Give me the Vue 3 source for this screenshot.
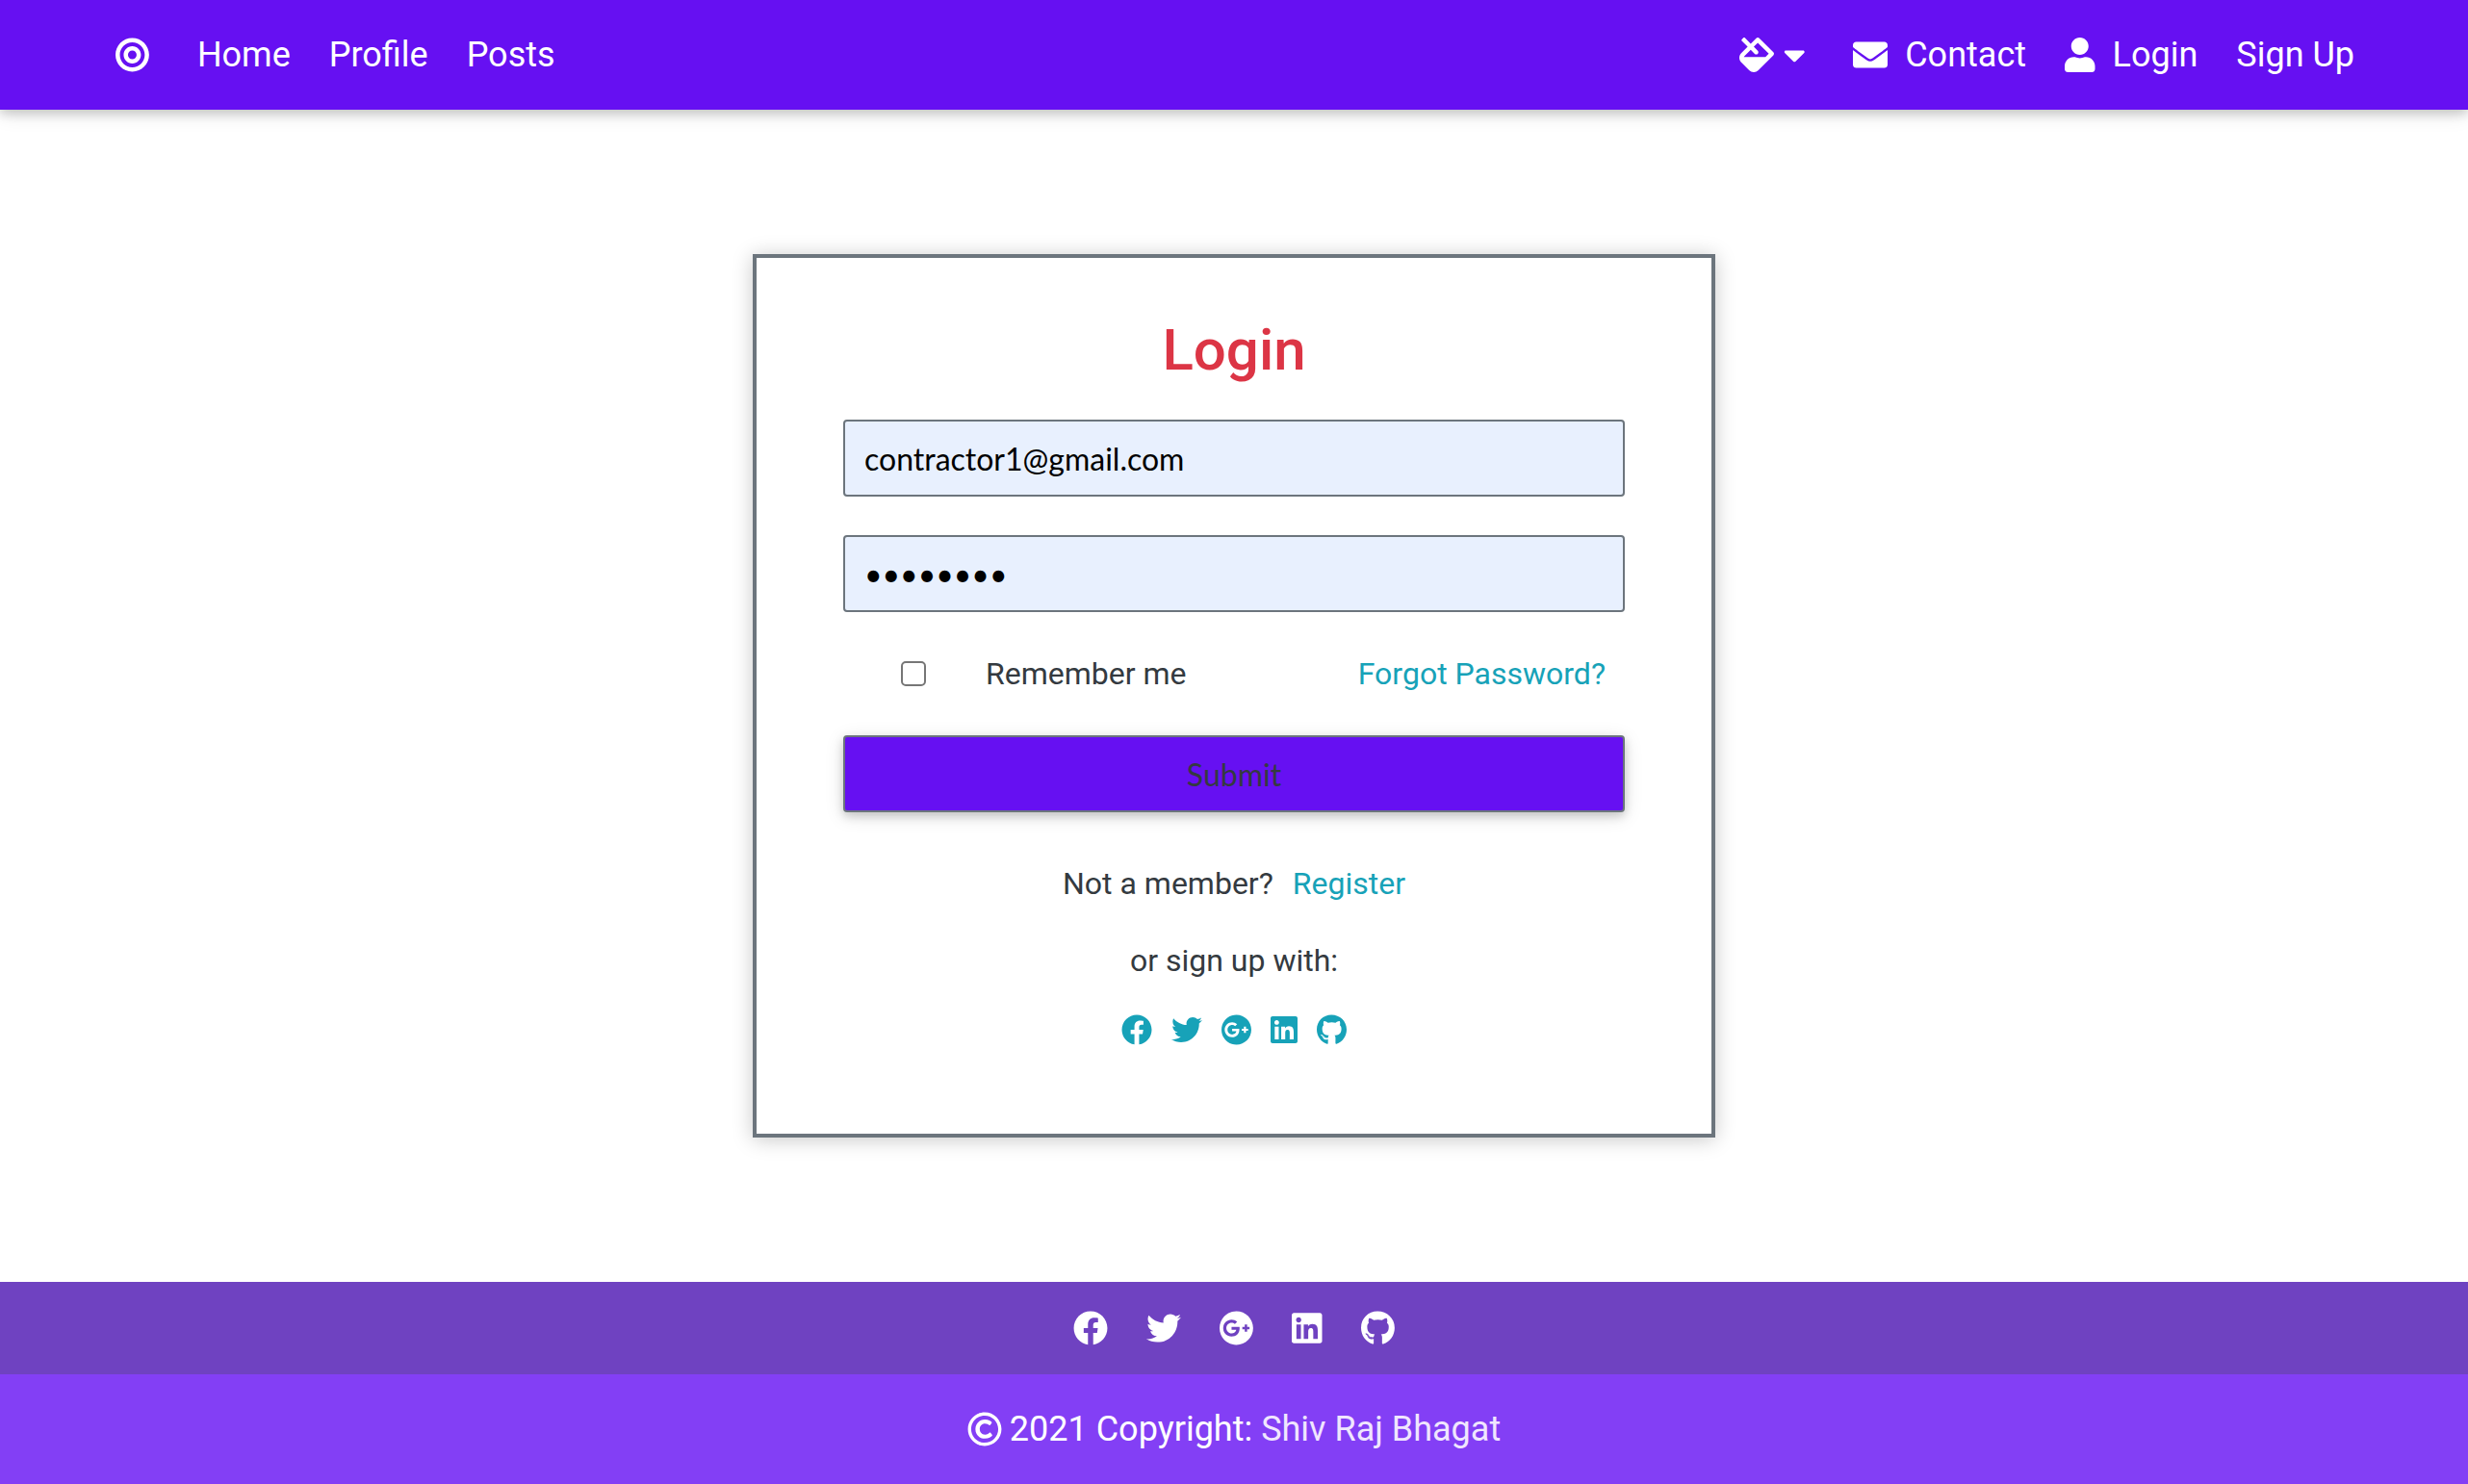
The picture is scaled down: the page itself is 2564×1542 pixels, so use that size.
<script setup>
import { h, ref } from 'vue'

const icons = {
  bullseye: [496, 'M248 8C111.03 8 0 119.03 0 256s111.03 248 248 248 248-111.03 248-248S384.97 8 248 8zm0 432c-101.69 0-184-82.29-184-184 0-101.69 82.29-184 184-184 101.69 0 184 82.29 184 184 0 101.69-82.29 184-184 184zm0-312c-70.69 0-128 57.31-128 128s57.31 128 128 128 128-57.31 128-128-57.31-128-128-128zm0 192c-35.29 0-64-28.71-64-64s28.71-64 64-64 64 28.71 64 64-28.71 64-64 64z'],
  fill: [512, 'M502.63 217.06L294.94 9.37C288.69 3.12 280.5 0 272.31 0s-16.38 3.12-22.62 9.37l-81.58 81.58L81.93 4.77c-6.24-6.25-16.38-6.25-22.62 0L36.69 27.38c-6.24 6.25-6.24 16.38 0 22.63l86.19 86.18-94.76 94.76c-37.49 37.49-37.49 98.26 0 135.75l117.19 117.19c18.75 18.74 43.31 28.12 67.87 28.12 24.57 0 49.13-9.37 67.88-28.12l221.57-221.57c12.49-12.5 12.49-32.76 0-45.26zm-116.22 70.97H65.93c1.36-3.84 3.57-7.98 7.43-11.83l13.15-13.15 81.61-81.61 58.61 58.6c12.49 12.49 32.75 12.49 45.24 0 12.49-12.49 12.49-32.75 0-45.24l-58.61-58.6 58.95-58.95 162.45 162.44-48.35 48.34z'],
  envelope: [512, 'M502.3 190.8c3.9-3.1 9.7-.2 9.7 4.7V400c0 26.5-21.5 48-48 48H48c-26.5 0-48-21.5-48-48V195.6c0-5 5.7-7.8 9.7-4.7 22.4 17.4 52.1 39.5 154.1 113.6 21.1 15.4 56.7 47.8 92.2 47.6 35.7.3 72-32.8 92.3-47.6 102-74.1 131.6-96.3 154-113.7zM256 320c23.2.4 56.6-29.2 73.4-41.4 132.7-96.3 142.8-104.7 173.4-128.7 5.8-4.5 9.2-11.5 9.2-18.9v-19c0-26.5-21.5-48-48-48H48c-26.5 0-48 21.5-48 48v19c0 7.4 3.4 14.3 9.2 18.9 30.6 23.9 40.7 32.4 173.4 128.7 16.8 12.2 50.2 41.8 73.4 41.4z'],
  user: [448, 'M224 256c70.7 0 128-57.3 128-128S294.7 0 224 0 96 57.3 96 128s57.3 128 128 128zm89.6 32h-16.7c-22.2 10.2-46.9 16-72.9 16s-50.6-5.8-72.9-16h-16.7C60.2 288 0 348.2 0 422.4V464c0 26.5 21.5 48 48 48h352c26.5 0 48-21.5 48-48v-41.6c0-74.2-60.2-134.4-134.4-134.4z'],
  caret: [320, 'M31.3 192h257.3c17.8 0 26.7 21.5 14.1 34.1L174.1 354.8c-7.8 7.8-20.5 7.8-28.3 0L17.2 226.1C4.6 213.5 13.5 192 31.3 192z'],
  facebook: [512, 'M504 256C504 119 393 8 256 8S8 119 8 256c0 123.78 90.69 226.38 209.25 245V327.69h-63V256h63v-54.64c0-62.15 37-96.48 93.67-96.48 27.14 0 55.52 4.84 55.52 4.84v61h-31.28c-30.8 0-40.41 19.12-40.41 38.73V256h68.78l-11 71.69h-57.78V501C413.31 482.38 504 379.78 504 256z'],
  twitter: [512, 'M459.37 151.716c.325 4.548.325 9.097.325 13.645 0 138.72-105.583 298.558-298.558 298.558-59.452 0-114.68-17.219-161.137-47.106 8.447.974 16.568 1.299 25.34 1.299 49.055 0 94.213-16.568 130.274-44.832-46.132-.975-84.792-31.188-98.112-72.772 6.498.974 12.995 1.624 19.818 1.624 9.421 0 18.843-1.3 27.614-3.573-48.081-9.747-84.143-51.98-84.143-102.985v-1.299c13.969 7.797 30.214 12.67 47.431 13.319-28.264-18.843-46.781-51.005-46.781-87.391 0-19.492 5.197-37.36 14.294-52.954 51.655 63.675 129.3 105.258 216.365 109.807-1.624-7.797-2.599-15.918-2.599-24.04 0-57.828 46.782-104.934 104.934-104.934 30.213 0 57.502 12.67 76.67 33.137 23.715-4.548 46.456-13.32 66.599-25.34-7.798 24.366-24.366 44.833-46.132 57.827 21.117-2.273 41.584-8.122 60.426-16.243-14.292 20.791-32.161 39.308-52.628 54.253z'],
  google: [496, 'M248 8C111.1 8 0 119.1 0 256s111.1 248 248 248 248-111.1 248-248S384.9 8 248 8zm-70.7 372c-68.8 0-124-55.5-124-124s55.2-124 124-124c31.3 0 60.1 11 83 32.3l-33.6 32.6c-13.2-12.9-31.3-19.1-49.4-19.1-42.9 0-77.2 35.5-77.2 78.1s34.2 78.1 77.2 78.1c32.6 0 64.9-19.1 70.1-53.3h-70.1v-42.6h116.9c1.3 6.8 1.9 13.6 1.9 20.7 0 70.8-47.5 121.2-118.8 121.2zm230.2-106.2v35.5H372v-35.5h-35.5v-35.5H372v-35.5h35.5v35.5h35.2v35.5h-35.2z'],
  linkedin: [448, 'M416 32H31.9C14.3 32 0 46.5 0 64.3v383.4C0 465.5 14.3 480 31.9 480H416c17.6 0 32-14.5 32-32.3V64.3c0-17.8-14.4-32.3-32-32.3zM135.4 416H69V202.2h66.5V416zm-33.2-243c-21.3 0-38.5-17.3-38.5-38.5S80.9 96 102.2 96c21.2 0 38.5 17.3 38.5 38.5 0 21.3-17.2 38.5-38.5 38.5zm282.1 243h-66.4V312c0-24.8-.5-56.7-34.5-56.7-34.6 0-39.9 27-39.9 54.9V416h-66.4V202.2h63.7v29.2h.9c8.9-16.8 30.6-34.5 62.9-34.5 67.2 0 79.7 44.3 79.7 101.9V416z'],
  github: [496, 'M165.9 397.4c0 2-2.3 3.6-5.2 3.6-3.3.3-5.6-1.3-5.6-3.6 0-2 2.3-3.6 5.2-3.6 3-.3 5.6 1.3 5.6 3.6zm-31.1-4.5c-.7 2 1.3 4.3 4.3 4.9 2.6 1 5.6 0 6.2-2s-1.3-4.3-4.3-5.2c-2.6-.7-5.5.3-6.2 2.3zm44.2-1.7c-2.9.7-4.9 2.6-4.6 4.9.3 2 2.9 3.3 5.9 2.6 2.9-.7 4.9-2.6 4.6-4.6-.3-1.9-3-3.2-5.9-2.9zM244.8 8C106.1 8 0 113.3 0 252c0 110.9 69.8 205.8 169.5 239.2 12.8 2.3 17.3-5.6 17.3-12.1 0-6.2-.3-40.4-.3-61.4 0 0-70 15-84.7-29.8 0 0-11.4-29.1-27.8-36.6 0 0-22.9-15.7 1.6-15.4 0 0 24.9 2 38.6 25.8 21.9 38.6 58.6 27.5 72.9 20.9 2.3-16 8.8-27.1 16-33.7-55.9-6.2-112.3-14.3-112.3-110.5 0-27.5 7.6-41.3 23.6-58.9-2.6-6.5-11.1-33.3 2.6-67.9 20.9-6.5 69 27 69 27 20-5.6 41.5-8.5 62.8-8.5s42.8 2.9 62.8 8.5c0 0 48.1-33.6 69-27 13.7 34.7 5.2 61.4 2.6 67.9 16 17.7 25.8 31.5 25.8 58.9 0 96.5-58.9 104.2-114.8 110.5 9.2 7.9 17 22.9 17 46.4 0 33.7-.3 75.4-.3 83.6 0 6.5 4.6 14.4 17.3 12.1C428.2 457.8 496 362.9 496 252 496 113.3 383.5 8 244.8 8zM97.2 352.9c-1.3 1-1 3.3.7 5.2 1.6 1.6 3.9 2.3 5.2 1 1.3-1 1-3.3-.7-5.2-1.6-1.6-3.9-2.3-5.2-1zm-10.8-8.1c-.7 1.3.3 2.9 2.3 3.9 1.6 1 3.6.7 4.3-.7.7-1.3-.3-2.9-2.3-3.9-2-.6-3.6-.3-4.3.7zm32.4 35.6c-1.6 1.3-1 4.3 1.3 6.2 2.3 2.3 5.2 2.6 6.5 1 1.3-1.3.7-4.3-1.3-6.2-2.2-2.3-5.2-2.6-6.5-1zm-11.4-14.7c-1.6 1-1.6 3.6 0 5.9 1.6 2.3 4.3 3.3 5.6 2.3 1.6-1.3 1.6-3.9 0-6.2-1.4-2.3-4-3.3-5.6-2z'],
  copyright: [512, 'M256 8C119.033 8 8 119.033 8 256s111.033 248 248 248 248-111.033 248-248S392.967 8 256 8zm0 448c-110.532 0-200-89.451-200-200 0-110.531 89.451-200 200-200 110.532 0 200 89.451 200 200 0 110.532-89.451 200-200 200zm107.351-101.064c-9.614 9.712-45.53 41.396-104.065 41.396-82.43 0-140.484-61.425-140.484-141.567 0-79.152 60.275-139.401 139.762-139.401 55.531 0 88.738 26.62 97.593 34.779a11.965 11.965 0 0 1 1.936 15.322l-18.155 28.113c-3.841 5.95-11.966 7.282-17.499 2.921-8.595-6.776-31.814-22.538-61.708-22.538-48.303 0-77.916 35.33-77.916 80.082 0 41.589 26.888 83.692 78.277 83.692 32.657 0 56.843-19.039 65.726-27.225 5.27-4.857 13.596-4.039 17.82 1.738l19.865 27.17a11.947 11.947 0 0 1-1.152 15.518z'],
}

// Solid glyph that scales with the surrounding font size
const Icon = ({ name }) =>
  h('svg', {
    viewBox: `0 0 ${icons[name][0]} 512`,
    style: { height: '1em', width: `${icons[name][0] / 512}em`, display: 'block' },
    fill: 'currentColor',
    'aria-hidden': 'true',
  }, [h('path', { d: icons[name][1] })])
Icon.props = ['name']

const socials = [
  { icon: 'facebook', label: 'Facebook' },
  { icon: 'twitter', label: 'Twitter' },
  { icon: 'google', label: 'Google Plus' },
  { icon: 'linkedin', label: 'LinkedIn' },
  { icon: 'github', label: 'GitHub' },
]

const email = ref('contractor1@gmail.com')
const password = ref('password')
const remember = ref(false)
</script>

<template>
  <div class="page">
    <header>
      <nav class="navbar">
        <a class="brand" href="#" aria-label="Start page"><Icon name="bullseye" /></a>
        <a href="#">Home</a>
        <a href="#">Profile</a>
        <a href="#">Posts</a>
        <button class="theme" type="button" aria-label="Choose colour">
          <Icon name="fill" /><Icon name="caret" />
        </button>
        <a class="with-icon" href="#"><Icon name="envelope" />Contact</a>
        <a class="with-icon" href="#"><Icon name="user" />Login</a>
        <a href="#">Sign Up</a>
      </nav>
    </header>

    <main>
      <form class="card" @submit.prevent>
        <h1>Login</h1>
        <input v-model="email" class="field" type="email" aria-label="E-mail">
        <input v-model="password" class="field" type="password" aria-label="Password">
        <div class="options">
          <input id="remember" v-model="remember" type="checkbox">
          <label for="remember">Remember me</label>
          <a class="forgot" href="#">Forgot Password?</a>
        </div>
        <button class="submit" type="submit">Submit</button>
        <p class="register">Not a member? <a href="#">Register</a></p>
        <p>or sign up with:</p>
        <div class="socials">
          <a v-for="s in socials" :key="s.icon" href="#" :aria-label="s.label"><Icon :name="s.icon" /></a>
        </div>
      </form>
    </main>

    <footer>
      <div class="footer-socials">
        <a v-for="s in socials" :key="s.icon" href="#" :aria-label="s.label"><Icon :name="s.icon" /></a>
      </div>
      <div class="copyright">
        <Icon name="copyright" />
        <span>2021 Copyright: <a href="#">Shiv Raj Bhagat</a></span>
      </div>
    </footer>
  </div>
</template>

<style>
body {
  margin: 0;
  background: #fff;
}
</style>

<style scoped>
.page {
  display: flex;
  flex-direction: column;
  min-height: 100vh;
  font-family: Roboto, sans-serif;
  font-size: 32px;
  line-height: 48px;
  color: #343a40;
}

.page *,
.page {
  box-sizing: border-box;
}

a {
  color: #17a2b8;
  text-decoration: none;
}

.navbar {
  display: flex;
  align-items: center;
  gap: 40px;
  padding: 30px 118px;
  background: #6610f2;
  box-shadow: 0 4px 10px rgba(0, 0, 0, 0.16), 0 4px 20px rgba(0, 0, 0, 0.12);
  font-size: 36px;
  line-height: 54px;
}

.navbar a,
.theme {
  color: #fff;
}

.navbar .brand {
  padding: 0 10px 0 2px;
}

.theme {
  display: flex;
  align-items: center;
  gap: 10px;
  margin-left: auto;
  padding: 0 10px 0 0;
  border: 0;
  background: none;
  font: inherit;
}

.with-icon {
  display: flex;
  align-items: center;
  gap: 18px;
}

main {
  display: flex;
  flex: 1;
  align-items: center;
  justify-content: center;
  padding: 150px 32px;
}

.card {
  display: flex;
  flex-direction: column;
  width: 1000px;
  max-width: 100%;
  padding: 60px 90px 92px;
  border: 4px solid #6c757d;
  box-shadow: 0 2px 20px rgba(0, 0, 0, 0.22);
  text-align: center;
}

h1 {
  margin: 0 0 36px;
  font-size: 60px;
  font-weight: 500;
  line-height: 72px;
  color: #dc3545;
}

.field {
  width: 100%;
  height: 80px;
  margin: 0 0 40px;
  padding: 0 20px;
  border: 2px solid #6c757d;
  border-radius: 4px;
  background: #e8f0fe;
  font-family: Lato, sans-serif;
  font-size: 32px;
  color: #000;
}

.options {
  display: flex;
  align-items: center;
  margin-bottom: 40px;
  padding: 0 20px 0 60px;
}

.options input {
  appearance: none;
  width: 26px;
  height: 26px;
  margin: 0 62px 0 0;
  border: 2px solid #767676;
  border-radius: 5px;
  background: #fff;
}

.options input:checked {
  border-color: #6610f2;
  background: #6610f2;
}

.forgot {
  margin-left: auto;
}

.submit {
  height: 80px;
  margin: 0 0 50px;
  padding: 0;
  border: 2px solid #6c757d;
  border-radius: 4px;
  background: #6610f2;
  box-shadow: 0 4px 10px rgba(0, 0, 0, 0.16), 0 4px 20px rgba(0, 0, 0, 0.12);
  font-family: Lato, sans-serif;
  font-size: 32px;
  color: #343a40;
}

p {
  margin: 0 0 32px;
}

.register a {
  margin-left: 12px;
}

.socials {
  display: flex;
  justify-content: center;
  gap: 20px;
}

.footer-socials {
  display: flex;
  justify-content: center;
  gap: 40px;
  padding: 30px;
  background: #6f42c1;
  font-size: 36px;
}

.footer-socials a {
  color: #fff;
}

.copyright {
  display: flex;
  align-items: center;
  justify-content: center;
  gap: 8px;
  padding: 30px;
  background: #833ff5;
  font-size: 36px;
  line-height: 54px;
  color: #fff;
}

.copyright a {
  color: #f0e6fe;
}
</style>
